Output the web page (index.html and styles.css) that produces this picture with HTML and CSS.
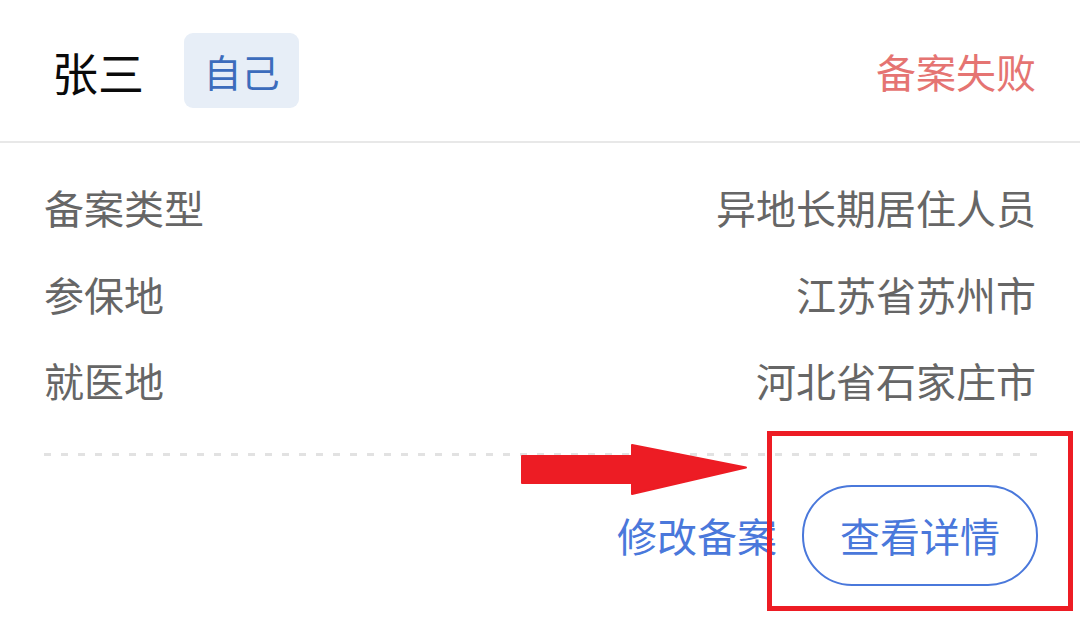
FILE: index.html
```html
<!DOCTYPE html>
<html lang="zh-CN">
<head>
    <meta charset="UTF-8">
    <meta name="viewport" content="width=device-width, initial-scale=1.0">
    <title>备案记录</title>
    <link rel="stylesheet" href="styles.css">
</head>
<body>

    <div class="card">
        <div class="card-header">
            <div class="person">
                <span class="person-name">张三</span>
                <span class="tag">自己</span>
            </div>
            <span class="status status-fail">备案失败</span>
        </div>

        <div class="card-body">
            <div class="info-row">
                <span class="info-label">备案类型</span>
                <span class="info-value">异地长期居住人员</span>
            </div>
            <div class="info-row">
                <span class="info-label">参保地</span>
                <span class="info-value">江苏省苏州市</span>
            </div>
            <div class="info-row">
                <span class="info-label">就医地</span>
                <span class="info-value">河北省石家庄市</span>
            </div>
        </div>

        <div class="card-footer">
            <a class="link-btn" href="#">修改备案</a>
            <a class="pill-btn" href="#">查看详情</a>
        </div>

        <!-- 标注 -->
        <svg class="mark-arrow" width="230" height="56" viewBox="0 0 230 56">
            <path d="M2 13 H112 V2 L226 24.5 L112 51 V40 H2 Z" fill="#ed1c24" stroke="#ed1c24" stroke-width="2" stroke-linejoin="round"/>
        </svg>
        <div class="mark-box"></div>
    </div>

</body>
</html>
```

FILE: styles.css
```css
/* 基础 */
body {
    font-family: "Noto Sans CJK SC", "Noto Sans", sans-serif;
    background-color: #fff;
    color: #333;
    margin: 0;
    padding: 0;
}
a {
    text-decoration: none;
}
.card {
    position: relative;
    width: 1080px;
    height: 618px;
    background-color: #fff;
    overflow: hidden;
}

/* 头部 */
.card-header {
    height: 141px;
    display: flex;
    align-items: center;
    justify-content: space-between;
    padding: 0 44px 0 52px;
    border-bottom: 2px solid #e8e8e8;
}
.person {
    display: flex;
    align-items: center;
    gap: 40px;
}
.person-name {
    font-size: 46px;
    line-height: 1;
    color: #0a0a0a;
}
.tag {
    display: flex;
    align-items: center;
    justify-content: center;
    width: 115px;
    height: 75px;
    border-radius: 9px;
    background-color: #e7eef7;
    color: #3c6cbc;
    font-size: 38px;
    line-height: 1;
}
.status {
    font-size: 40px;
    line-height: 1;
}
.status-fail {
    color: #e57472;
}

/* 信息 */
.card-body {
    padding: 21px 44px 0;
}
.info-row {
    display: flex;
    justify-content: space-between;
    align-items: center;
    height: 86.5px;
    font-size: 40px;
    color: #666;
}

/* 底部 */
.card-footer {
    margin: 29px 42px 0 44px;
    padding-top: 32px;
    display: flex;
    justify-content: flex-end;
    align-items: center;
    gap: 25px;
    background-image: linear-gradient(to right, #e2e2e2 7px, transparent 7px);
    background-size: 17px 3px;
    background-repeat: repeat-x;
    background-position: 0 0;
}
.link-btn {
    font-size: 40px;
    color: #4a78db;
}
.pill-btn {
    display: flex;
    align-items: center;
    justify-content: center;
    width: 232px;
    height: 97px;
    border: 2px solid #4a78db;
    border-radius: 50px;
    font-size: 40px;
    color: #4a78db;
}

/* 标注 */
.mark-arrow {
    position: absolute;
    left: 520px;
    top: 443px;
}
.mark-box {
    position: absolute;
    left: 767px;
    top: 431px;
    width: 296px;
    height: 170px;
    border: 5px solid #ed1c24;
}
```
